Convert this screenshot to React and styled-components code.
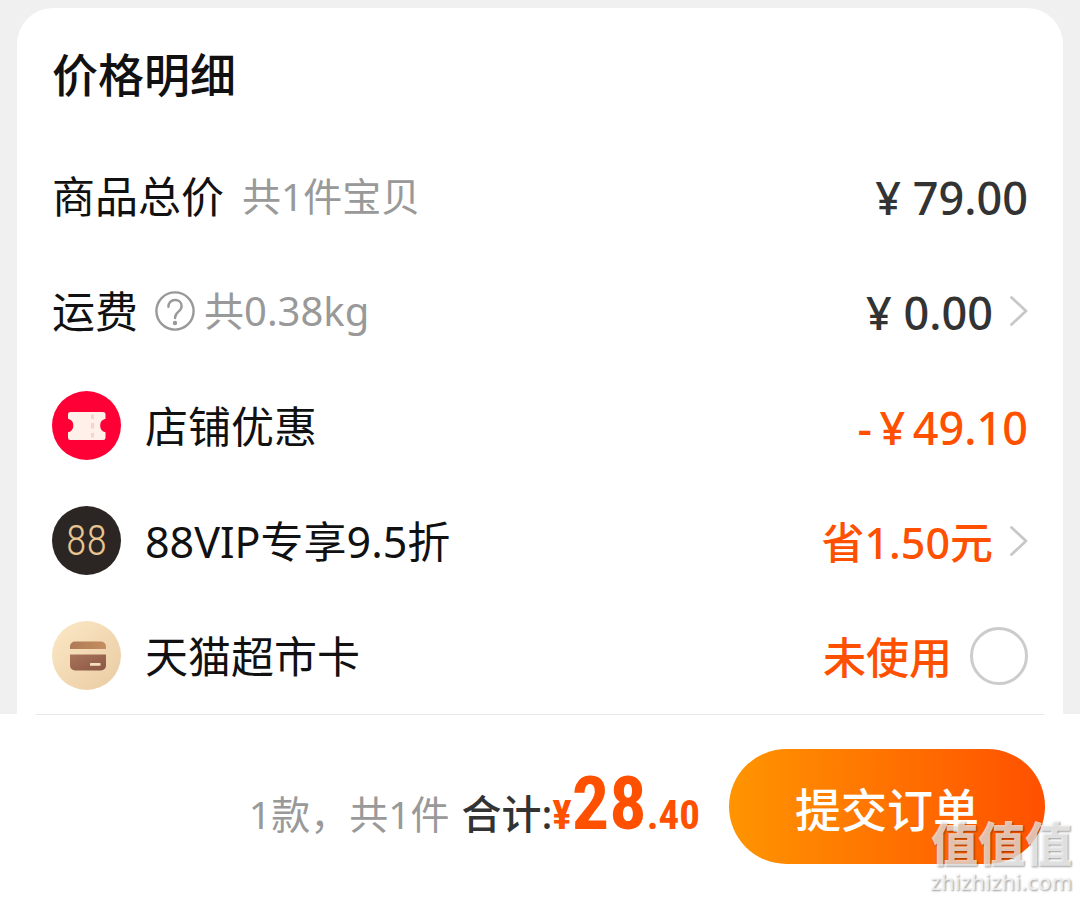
import { useState } from "react";
import styled, { createGlobalStyle } from "styled-components";

function App() {
  const [useCard, setUseCard] = useState(false);

  return (
    <Page>
      <GlobalStyle />
      <Card>
        <Title>价格明细</Title>
        <List>
          <Row>
            <Label>商品总价</Label>
            <Note>共1件宝贝</Note>
            <Amount>¥ 79.00</Amount>
          </Row>
          <Row>
            <Label>运费</Label>
            <HelpButton type="button" aria-label="运费说明">
              <HelpIcon />
            </HelpButton>
            <Note $weight>共0.38kg</Note>
            <Amount>¥ 0.00</Amount>
            <MoreButton type="button" aria-label="运费详情">
              <Chevron />
            </MoreButton>
          </Row>
          <Row>
            <CouponIcon />
            <Label $afterIcon>店铺优惠</Label>
            <Amount $highlight>-{"\u2006"}¥{"\u2006"}49.10</Amount>
          </Row>
          <Row>
            <VipBadge aria-hidden="true">88</VipBadge>
            <Label $afterIcon>88VIP专享9.5折</Label>
            <Status>省1.50元</Status>
            <MoreButton type="button" aria-label="88VIP详情">
              <Chevron />
            </MoreButton>
          </Row>
          <Row>
            <CardIcon />
            <Label $afterIcon as="label" htmlFor="market-card">
              天猫超市卡
            </Label>
            <Status>未使用</Status>
            <Radio
              id="market-card"
              checked={useCard}
              onChange={(e) => setUseCard(e.target.checked)}
            />
          </Row>
        </List>
      </Card>
      <Footer>
        <Summary>
          <Count>1款，共1件</Count>
          <TotalLabel>合计:</TotalLabel>
          <Total>
            <small>¥</small>28<small>.40</small>
          </Total>
        </Summary>
        <SubmitButton type="button">提交订单</SubmitButton>
      </Footer>
      <Watermark>
        <WatermarkName>值值值</WatermarkName>
        <WatermarkUrl>zhizhizhi.com</WatermarkUrl>
      </Watermark>
    </Page>
  );
}

const HelpIcon = () => (
  <svg width="40" height="40" viewBox="0 0 40 40" fill="none" stroke="#999" strokeWidth="2.4">
    <circle cx="20" cy="20" r="18.6" />
    <path
      d="M13.4 15.800c0-4 2.800-6.800 6.600-6.800s6.600 2.600 6.600 6.200c0 2.800-1.800 4.300-3.600 5.900-1.900 1.700-3 2.900-3 6"
      strokeLinecap="round"
    />
    <circle cx="20" cy="32" r="2.200" fill="#999" stroke="none" />
  </svg>
);

const Chevron = () => (
  <svg width="19" height="32" viewBox="0 0 19 32" fill="none" stroke="#c8c8c8" strokeWidth="2.8">
    <path d="M2.5 2.5 17 16 2.5 29.5" strokeLinecap="round" strokeLinejoin="round" />
  </svg>
);

const CouponIcon = () => (
  <svg width="69" height="69" viewBox="0 0 69 69">
    <circle cx="34.5" cy="34.5" r="34.5" fill="#ff0036" />
    <path
      fill="#fff1ea"
      d="M18.500 21h32.500a2.500 2.500 0 0 1 2.500 2.500v4.200a7 7 0 0 0 0 13.600v5.200a2.500 2.500 0 0 1-2.500 2.500h-32.500a2.500 2.500 0 0 1-2.500-2.500v-5.200a7 7 0 0 0 0-13.600v-4.200a2.500 2.500 0 0 1 2.500-2.500z"
    />
    <path d="M40.5 23.500v4.500M40.500 32v5.500M40.500 42v4.500" stroke="#f6d3cb" strokeWidth="3" />
  </svg>
);

const CardIcon = () => (
  <svg width="69" height="69" viewBox="0 0 69 69">
    <defs>
      <linearGradient id="gold" x1="0" y1="0" x2="1" y2="1">
        <stop offset="0" stopColor="#fce8c6" />
        <stop offset="1" stopColor="#e9cba2" />
      </linearGradient>
      <linearGradient id="copper" x1="0" y1="0" x2="1" y2="0">
        <stop offset="0" stopColor="#b07a57" />
        <stop offset="1" stopColor="#c48e60" />
      </linearGradient>
      <linearGradient id="brown" x1="0" y1="0" x2="1" y2="1">
        <stop offset="0" stopColor="#a9745a" />
        <stop offset="1" stopColor="#8a5745" />
      </linearGradient>
    </defs>
    <circle cx="34.5" cy="34.5" r="34.5" fill="url(#gold)" />
    <path fill="url(#copper)" d="M18 28v-2.500a5 5 0 0 1 5-5h26a5 5 0 0 1 5 5V28z" />
    <path fill="url(#brown)" d="M18 33.500h36v11a5 5 0 0 1-5 5H23a5 5 0 0 1-5-5z" />
    <rect x="38" y="42" width="10.5" height="2.8" rx="0.6" fill="#f6dfc2" />
  </svg>
);

const GlobalStyle = createGlobalStyle`
  * {
    box-sizing: border-box;
  }
  body {
    margin: 0;
    background: #f0f0f0;
    color: #111;
    font-family: "Noto Sans", "Noto Sans CJK SC", sans-serif;
  }
  button {
    padding: 0;
    border: none;
    background: none;
    font-family: inherit;
    cursor: pointer;
  }
  svg {
    display: block;
    flex: none;
  }
`;

const Page = styled.div`
  position: relative;
  display: flex;
  flex-direction: column;
  min-height: 100vh;
`;

const Card = styled.section`
  margin: 8px 17px 0;
  padding: 0 35px;
  background: #fff;
  border-radius: 36px 36px 0 0;
`;

const Title = styled.h1`
  margin: 0;
  padding: 34px 0 32px;
  font-size: 46px;
  line-height: 64px;
  font-weight: 500;
`;

const List = styled.ul`
  margin: 0;
  padding: 0 0 1px;
  list-style: none;
`;

const Row = styled.li`
  display: flex;
  align-items: center;
  height: 115px;
  white-space: nowrap;
`;

const Label = styled.span`
  margin-left: ${(props) => (props.$afterIcon ? "24px" : "0")};
  padding-top: 2px;
  font-size: 43px;
  line-height: 64px;
`;

const Note = styled.span`
  margin-left: ${(props) => (props.$weight ? "9px" : "18px")};
  color: #999;
  font-size: ${(props) => (props.$weight ? "40px" : "39px")};
  line-height: 64px;
`;

const HelpButton = styled.button`
  margin-left: 17px;
`;

const MoreButton = styled.button`
  margin-left: 16px;
`;

const Amount = styled.span`
  margin-left: auto;
  padding-top: 4px;
  color: ${(props) => (props.$highlight ? "#ff5000" : "#333")};
  font-size: 45px;
  line-height: 64px;
  font-weight: 500;
`;

const Status = styled.span`
  margin-left: auto;
  padding-top: 4px;
  color: #ff5000;
  font-size: 43px;
  line-height: 64px;
  font-weight: 500;
`;

const VipBadge = styled.span`
  width: 69px;
  height: 69px;
  border-radius: 50%;
  background: #2b2524;
  color: #e8c590;
  font-family: "Roboto Condensed", Roboto, sans-serif;
  font-size: 42px;
  line-height: 69px;
  font-weight: 300;
  text-align: center;
`;

const Radio = styled.input.attrs({ type: "checkbox" })`
  appearance: none;
  width: 58px;
  height: 58px;
  margin: 0 0 0 18px;
  border: 3px solid #ccc;
  border-radius: 50%;
  cursor: pointer;
  &:checked {
    border: 16px solid #ff5000;
  }
`;

const Footer = styled.footer`
  flex: 1;
  display: flex;
  align-items: flex-start;
  justify-content: flex-end;
  padding: 35px 35px 36px;
  background: #fff;
  &::before {
    content: "";
    position: absolute;
    left: 36px;
    right: 36px;
    margin-top: -35px;
    border-top: 1px solid #e8e8e8;
  }
`;

const Summary = styled.p`
  display: flex;
  align-items: baseline;
  margin: 15px 29px 0 0;
  white-space: nowrap;
`;

const Count = styled.span`
  color: #999;
  font-size: 39px;
`;

const TotalLabel = styled.span`
  margin-left: 12px;
  color: #333;
  font-size: 40px;
  font-weight: 500;
`;

const Total = styled.strong`
  color: #ff5000;
  font-family: "Roboto Condensed", Roboto, sans-serif;
  font-size: 74px;
  line-height: 80px;
  font-weight: 700;
  small {
    font-size: 41px;
  }
`;

const SubmitButton = styled.button`
  height: 115px;
  padding: 0 66px;
  border-radius: 58px;
  background: linear-gradient(to right, #ff9500, #ff5000);
  color: #fff;
  font-size: 46px;
  font-weight: 500;
`;

const Watermark = styled.div`
  position: absolute;
  right: 8px;
  bottom: 6px;
  color: rgba(255, 255, 255, 0.7);
  text-align: right;
  text-shadow: 1px 1px 2px rgba(0, 0, 0, 0.4);
  pointer-events: none;
`;

const WatermarkName = styled.div`
  font-size: 47px;
  line-height: 50px;
  font-weight: 900;
`;

const WatermarkUrl = styled.div`
  font-size: 22px;
  line-height: 26px;
  font-weight: 500;
`;

export default App;
